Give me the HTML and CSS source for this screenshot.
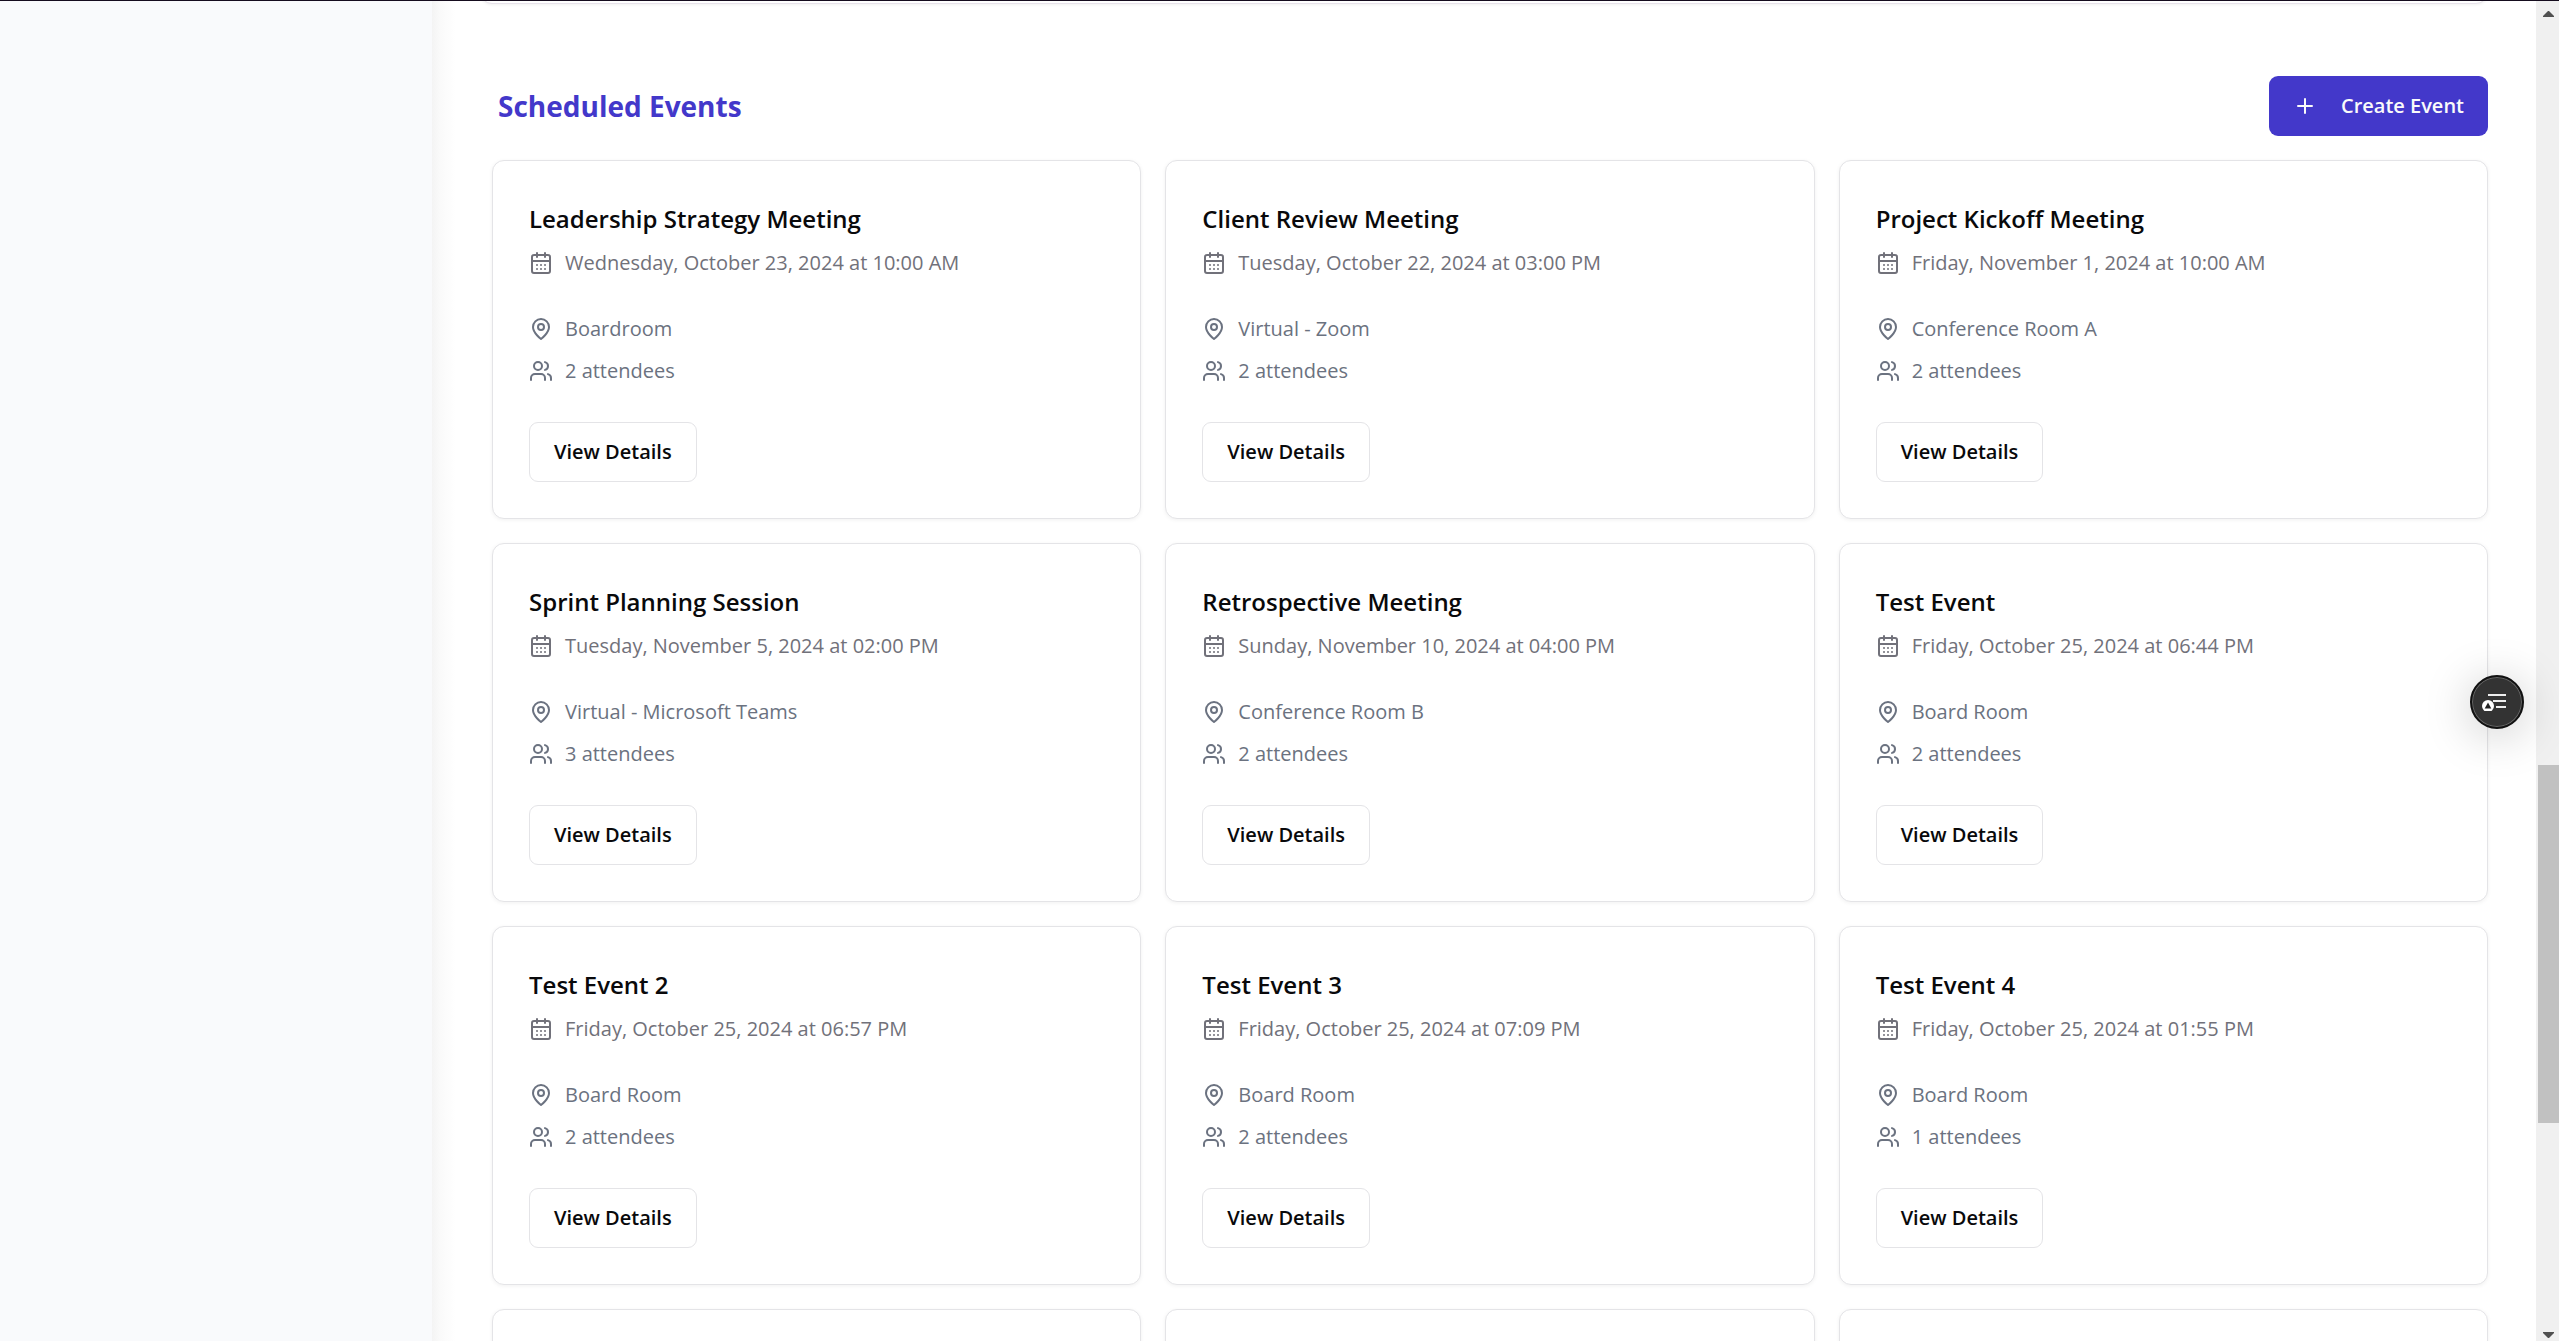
FILE: index.html
```html
<!DOCTYPE html>
<html lang="en">
<head>
<meta charset="utf-8">
<title>Scheduled Events</title>
<link rel="stylesheet" href="styles.css">
</head>
<body>
<svg class="sprite" aria-hidden="true">
  <symbol id="calendar" viewBox="0 0 24 24"><path d="M8 2v4M16 2v4M3 10h18M8 14h.01M12 14h.01M16 14h.01M8 18h.01M12 18h.01M16 18h.01"/><rect x="3" y="4" width="18" height="18" rx="2"/></symbol>
  <symbol id="pin" viewBox="0 0 24 24"><path d="M20 10c0 6-8 12-8 12s-8-6-8-12a8 8 0 0 1 16 0Z"/><circle cx="12" cy="10" r="3"/></symbol>
  <symbol id="users" viewBox="0 0 24 24"><path d="M16 21v-2a4 4 0 0 0-4-4H6a4 4 0 0 0-4 4v2M22 21v-2a4 4 0 0 0-3-3.87M16 3.13a4 4 0 0 1 0 7.75"/><circle cx="9" cy="7" r="4"/></symbol>
  <symbol id="plus" viewBox="0 0 24 24"><path d="M5 12h14M12 5v14"/></symbol>
</svg>
<div class="app">
  <aside class="sidebar"></aside>
  <main class="main">
    <div class="panel-end"></div>
    <section class="events">
      <header class="events-header">
        <h2>Scheduled Events</h2>
        <button class="btn btn-primary" type="button"><svg class="icon"><use href="#plus"/></svg>Create Event</button>
      </header>
      <div class="grid">
        <article class="card">
          <h3>Leadership Strategy Meeting</h3>
          <p class="row date"><svg class="icon"><use href="#calendar"/></svg>Wednesday, October 23, 2024 at 10:00 AM</p>
          <p class="row"><svg class="icon"><use href="#pin"/></svg>Boardroom</p>
          <p class="row"><svg class="icon"><use href="#users"/></svg>2 attendees</p>
          <button class="btn btn-outline" type="button">View Details</button>
        </article>
        <article class="card">
          <h3>Client Review Meeting</h3>
          <p class="row date"><svg class="icon"><use href="#calendar"/></svg>Tuesday, October 22, 2024 at 03:00 PM</p>
          <p class="row"><svg class="icon"><use href="#pin"/></svg>Virtual - Zoom</p>
          <p class="row"><svg class="icon"><use href="#users"/></svg>2 attendees</p>
          <button class="btn btn-outline" type="button">View Details</button>
        </article>
        <article class="card">
          <h3>Project Kickoff Meeting</h3>
          <p class="row date"><svg class="icon"><use href="#calendar"/></svg>Friday, November 1, 2024 at 10:00 AM</p>
          <p class="row"><svg class="icon"><use href="#pin"/></svg>Conference Room A</p>
          <p class="row"><svg class="icon"><use href="#users"/></svg>2 attendees</p>
          <button class="btn btn-outline" type="button">View Details</button>
        </article>
        <article class="card">
          <h3>Sprint Planning Session</h3>
          <p class="row date"><svg class="icon"><use href="#calendar"/></svg>Tuesday, November 5, 2024 at 02:00 PM</p>
          <p class="row"><svg class="icon"><use href="#pin"/></svg>Virtual - Microsoft Teams</p>
          <p class="row"><svg class="icon"><use href="#users"/></svg>3 attendees</p>
          <button class="btn btn-outline" type="button">View Details</button>
        </article>
        <article class="card">
          <h3>Retrospective Meeting</h3>
          <p class="row date"><svg class="icon"><use href="#calendar"/></svg>Sunday, November 10, 2024 at 04:00 PM</p>
          <p class="row"><svg class="icon"><use href="#pin"/></svg>Conference Room B</p>
          <p class="row"><svg class="icon"><use href="#users"/></svg>2 attendees</p>
          <button class="btn btn-outline" type="button">View Details</button>
        </article>
        <article class="card">
          <h3>Test Event</h3>
          <p class="row date"><svg class="icon"><use href="#calendar"/></svg>Friday, October 25, 2024 at 06:44 PM</p>
          <p class="row"><svg class="icon"><use href="#pin"/></svg>Board Room</p>
          <p class="row"><svg class="icon"><use href="#users"/></svg>2 attendees</p>
          <button class="btn btn-outline" type="button">View Details</button>
        </article>
        <article class="card">
          <h3>Test Event 2</h3>
          <p class="row date"><svg class="icon"><use href="#calendar"/></svg>Friday, October 25, 2024 at 06:57 PM</p>
          <p class="row"><svg class="icon"><use href="#pin"/></svg>Board Room</p>
          <p class="row"><svg class="icon"><use href="#users"/></svg>2 attendees</p>
          <button class="btn btn-outline" type="button">View Details</button>
        </article>
        <article class="card">
          <h3>Test Event 3</h3>
          <p class="row date"><svg class="icon"><use href="#calendar"/></svg>Friday, October 25, 2024 at 07:09 PM</p>
          <p class="row"><svg class="icon"><use href="#pin"/></svg>Board Room</p>
          <p class="row"><svg class="icon"><use href="#users"/></svg>2 attendees</p>
          <button class="btn btn-outline" type="button">View Details</button>
        </article>
        <article class="card">
          <h3>Test Event 4</h3>
          <p class="row date"><svg class="icon"><use href="#calendar"/></svg>Friday, October 25, 2024 at 01:55 PM</p>
          <p class="row"><svg class="icon"><use href="#pin"/></svg>Board Room</p>
          <p class="row"><svg class="icon"><use href="#users"/></svg>1 attendees</p>
          <button class="btn btn-outline" type="button">View Details</button>
        </article>
        <article class="card"></article>
        <article class="card"></article>
        <article class="card"></article>
      </div>
    </section>
  </main>
  <div class="scrollbar" aria-hidden="true">
    <svg class="arrow" viewBox="0 0 11 6"><path d="M5 0h1l5 5v1H0V5z"/></svg>
    <div class="thumb"></div>
    <svg class="arrow" viewBox="0 0 11 6"><path d="M0 0h11v1L6 6H5L0 1z"/></svg>
  </div>
</div>
<button class="fab" type="button" aria-label="Page outline">
  <svg viewBox="0 0 30 18"><path class="lines" d="M6 2h18M11 8h13M14 14h10"/><circle class="dot" cx="6" cy="13" r="6"/><path class="tip" d="M6 9.500l3.300 6H2.700z"/></svg>
</button>
</body>
</html>
```

FILE: styles.css
```css
* { box-sizing: border-box; }
body {
  margin: 0;
  overflow: hidden;
  background: #fff;
  color: #09090b;
  font: 20px/30px "Open Sans", "Noto Sans", sans-serif;
}
h2, h3, p { margin: 0; }
.sprite { display: none; }
.app {
  display: flex;
  height: 100vh;
  border-top: 1px solid #150c1e;
}
.sidebar {
  flex: 0 0 432px;
  background: #f9fafc;
}
.main {
  flex: 1;
  min-width: 0;
  overflow: hidden;
  padding: 0 48px;
  background: linear-gradient(to right, #f4f4f4, #fafafa 8px, #fff 24px);
}
.panel-end {
  height: 24px;
  margin-top: -21px;
  border: 1px solid #e7e2ea;
  border-radius: 12px;
  background: #fff;
  box-shadow: 0 1px 3px rgba(0, 0, 0, 0.06);
}
.events { padding: 72px 0 0 12px; }
.events-header {
  display: flex;
  align-items: center;
  justify-content: space-between;
  padding-left: 6px;
  margin-bottom: 24px;
}
.events-header h2 {
  color: #4338ca;
  font-size: 28px;
  line-height: 42px;
  font-weight: 700;
}
.grid {
  display: grid;
  grid-template-columns: repeat(3, 1fr);
  gap: 24px;
}
.card {
  display: flex;
  flex-direction: column;
  align-items: flex-start;
  padding: 36px;
  border: 1px solid #e4e4e7;
  border-radius: 12px;
  background: #fff;
  box-shadow: 0 1px 4px rgba(0, 0, 0, 0.06);
}
.card h3 {
  margin-bottom: 7px;
  font-size: 24px;
  line-height: 44px;
  font-weight: 600;
}
.row {
  display: flex;
  align-items: center;
  gap: 12px;
  margin-bottom: 12px;
  color: #6b7280;
}
.date {
  margin-bottom: 36px;
  color: #71717a;
}
.icon {
  width: 24px;
  height: 24px;
  flex: none;
  fill: none;
  stroke: currentColor;
  stroke-width: 2;
  stroke-linecap: round;
  stroke-linejoin: round;
}
.btn {
  display: flex;
  align-items: center;
  gap: 24px;
  height: 60px;
  padding: 0 24px;
  border: 0;
  border-radius: 9px;
  font: inherit;
  font-weight: 600;
}
.btn-primary { background: #4338ca; color: #fafafa; }
.btn-outline {
  margin-top: 24px;
  border: 1px solid #e4e4e7;
  background: #fff;
  color: #09090b;
}
.scrollbar {
  position: relative;
  display: flex;
  flex: 0 0 23px;
  flex-direction: column;
  align-items: center;
  justify-content: space-between;
  padding: 10px 0 3px 2px;
  background: #f0f0f0;
}
.arrow { width: 11px; height: 6px; fill: #505050; }
.thumb {
  position: absolute;
  top: 57%;
  bottom: 218px;
  right: 0;
  left: 2px;
  background: #c1c1c1;
}
.fab {
  position: fixed;
  top: calc(50% + 4px);
  right: 35px;
  display: grid;
  place-items: center;
  width: 54px;
  height: 54px;
  padding: 0;
  border: 2px solid #111;
  border-radius: 50%;
  background: #333;
  box-shadow: inset 0 0 0 1px #666, 0 6px 48px rgba(0, 0, 0, 0.22);
}
.fab svg { width: 30px; height: 18px; }
.lines { fill: none; stroke: #eee; stroke-width: 2; }
.dot { fill: #fff; }
.tip { fill: #222; }
```
